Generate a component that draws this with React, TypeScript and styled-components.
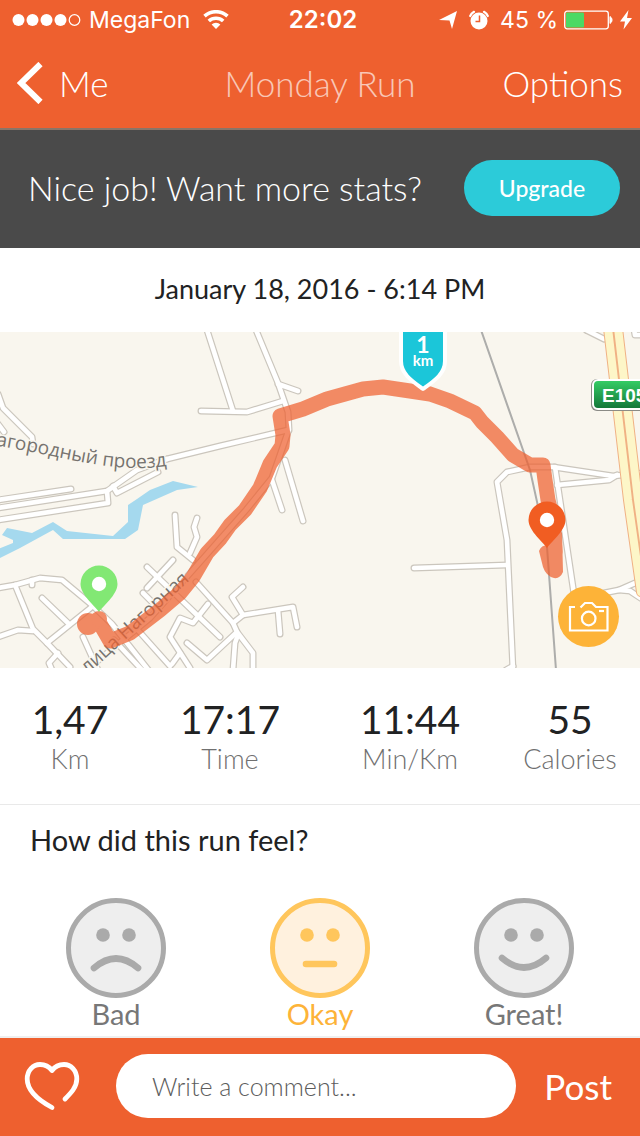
import React from "react";
import styled, { createGlobalStyle } from "styled-components";

const color = {
  orange: "#ee602f",
  cyan: "#2ccbd9",
  amber: "#fdb338",
  dark: "#4a4a4a",
  ink: "#212223",
  grey: "#707070",
  line: "#e9e9e9",
};

const GlobalStyle = createGlobalStyle`
  *, *::before, *::after { box-sizing: border-box; }
  body {
    margin: 0;
    background: #fff;
    color: ${color.ink};
    font-family: Lato, "Open Sans", sans-serif;
  }
  button, input { font: inherit; }
`;

const Screen = styled.div`
  min-height: 100vh;
  display: flex;
  flex-direction: column;
`;

const Header = styled.header`
  background: ${color.orange};
  color: #fff;
  border-bottom: 2px solid #8a7568;
`;

const StatusBar = styled.div`
  display: grid;
  grid-template-columns: 1fr auto 1fr;
  align-items: center;
  height: 40px;
  padding: 0 6px 0 12px;
  font-family: Inter, Roboto, sans-serif;
  font-size: 23px;
  line-height: 32px;
`;

const StatusGroup = styled.div<{ $end?: boolean }>`
  display: flex;
  align-items: center;
  gap: ${(p) => (p.$end ? 6 : 8)}px;
  justify-content: ${(p) => (p.$end ? "flex-end" : "flex-start")};
  white-space: nowrap;
`;

const Clock = styled.time`
  font-size: 24px;
  font-weight: 600;
`;

const NavBar = styled.nav`
  display: grid;
  grid-template-columns: 1fr auto 1fr;
  align-items: center;
  height: 88px;
  padding: 0 17px 2px;
`;

const NavButton = styled.button<{ $end?: boolean }>`
  display: flex;
  align-items: center;
  gap: 16px;
  justify-self: ${(p) => (p.$end ? "end" : "start")};
  padding: 0;
  border: 0;
  background: none;
  color: #fff;
  font-size: 35px;
  font-weight: 300;
  line-height: 40px;
`;

const Title = styled.h1`
  margin: 0;
  font-size: 35px;
  font-weight: 300;
  line-height: 40px;
  opacity: 0.65;
`;

const Banner = styled.section`
  display: flex;
  align-items: center;
  justify-content: space-between;
  height: 118px;
  padding: 0 20px 2px 28px;
  background: ${color.dark};
  color: #fff;
`;

const BannerText = styled.p`
  margin: 0;
  font-size: 34px;
  font-weight: 300;
  line-height: 40px;
`;

const UpgradeButton = styled.button`
  width: 156px;
  height: 56px;
  padding: 0;
  border: 0;
  border-radius: 28px;
  background: ${color.cyan};
  color: #fff;
  font-size: 23px;
  font-weight: 500;
`;

const RunDate = styled.p`
  margin: 0;
  padding: 25px 0 27px;
  font-size: 27px;
  line-height: 32px;
  text-align: center;
`;

const MapPanel = styled.section`
  position: relative;
  height: 336px;
  background: #f9f6ee;
  overflow: hidden;
`;

const MapDrawing = styled.svg`
  display: block;
  width: 100%;
  height: 100%;
`;

const CameraButton = styled.button`
  position: absolute;
  right: 21px;
  bottom: 21px;
  width: 61px;
  height: 61px;
  padding: 0;
  border: 0;
  border-radius: 50%;
  background: ${color.amber};
`;

const Stats = styled.dl`
  display: grid;
  grid-template-columns: 7fr 9fr 9fr 7fr;
  margin: 0;
  padding: 27px 0 29px;
  border-bottom: 1px solid ${color.line};
`;

const Stat = styled.div`
  display: flex;
  flex-direction: column-reverse;
  align-items: center;
`;

const StatLabel = styled.dt`
  color: ${color.grey};
  font-size: 27px;
  font-weight: 300;
  line-height: 32px;
`;

const StatValue = styled.dd`
  margin: 0;
  font-size: 39px;
  line-height: 48px;
`;

const Feel = styled.fieldset`
  flex: 1;
  min-width: 0;
  margin: 0;
  padding: 0 14px;
  border: 0;
  border-bottom: 2px solid #efefef;
`;

const Question = styled.legend`
  padding: 19px 16px 42px;
  font-size: 29px;
  line-height: 32px;
`;

const Moods = styled.div`
  display: grid;
  grid-template-columns: repeat(3, 1fr);
`;

const Mood = styled.label<{ $on?: boolean }>`
  position: relative;
  display: flex;
  flex-direction: column;
  align-items: center;
  color: ${(p) => (p.$on ? color.amber : "#777")};
  font-size: 29px;
  line-height: 32px;
`;

const MoodRadio = styled.input`
  position: absolute;
  opacity: 0;
`;

const CommentBar = styled.form`
  display: flex;
  align-items: center;
  height: 98px;
  padding: 0 28px 2px 24px;
  background: ${color.orange};
`;

const LikeButton = styled.button`
  display: flex;
  padding: 0;
  border: 0;
  background: none;
`;

const CommentInput = styled.input`
  flex: 1;
  min-width: 0;
  height: 64px;
  margin: 0 28px 0 36px;
  padding: 0 36px;
  border: 0;
  border-radius: 32px;
  background: #fff;
  font-size: 25px;
  font-weight: 300;
  &::placeholder { color: #5c5c5c; opacity: 1; }
`;

const PostButton = styled.button`
  padding: 0;
  border: 0;
  background: none;
  color: #fff;
  font-size: 35px;
  line-height: 40px;
`;

const roads = [
  "M-2 62L3 76L32 105L33 112", "M-2 92L4 100",
  "M207 -2L233 79", "M201 79L247 80L283 69",
  "M256 -2L278 51L288 80L289 98", "M278 52L298 59",
  "M167 127L220 114L288 98",
  "M288 100L272 146L246 178L200 230L150 286L84 340",
  "M285 128L303 189", "M272 148L282 178",
  "M-2 168L71 157", "M-2 176L107 159L137 138L167 127",
  "M-2 188L108 171L107 159", "M113 154L117 161L158 140",
  "M-2 256L15 253L40 246L62 248L92 273L112 292L150 340",
  "M15 253L33 297L47 311L70 335", "M-2 305L18 298L33 299",
  "M42 266L68 291", "M47 311L93 274", "M32 248L32 253",
  "M58 321L49 331L52 338", "M83 305L98 338", "M114 308L142 338",
  "M175 183L177 215L193 228", "M197 186L194 195L197 205L190 221",
  "M147 235L220 305", "M173 228L147 256", "M143 261L153 271",
  "M136 296L170 334", "M196 250L233 291L237 300L253 321L253 338",
  "M208 272L193 291L180 286L170 305L190 336", "M180 321L172 332",
  "M187 311L207 328L237 300", "M233 291L243 283L232 265L243 255",
  "M243 283L293 275L297 295", "M278 278L280 302", "M238 303L235 311L233 338",
  "M414 236L507 233",
  "M513 338L507 208L497 150L507 140L530 135L553 135L613 144L642 141",
  "M513 334L506 338",
  "M555 135L574 262L580 290", "M557 153L609 148L617 143",
  "M586 -2L604 7", "M634 -3L635 3L642 3",
  "M604 261L619 258L642 248", "M619 258L630 259L642 267",
];

const track =
  "M88 291L99 290L110 309L130 301L160 278L180 261L193 245L207 221L220 207L230 193L245 178L260 156L270 132L282 114L283 103L280 84L303 77L327 67L363 57L383 55L410 59L430 62L450 69L475 81L482 90L497 105L513 123L530 133L543 133L545 148L548 168L553 188L555 220";

const Pin = ({ x, y, fill }: { x: number; y: number; fill: string }) => (
  <g transform={`translate(${x} ${y})`}>
    <path d="M0 28C-3 23 -18.5 11 -18.5 0A18.5 18.5 0 0 1 18.5 0C18.5 11 3 23 0 28Z" fill={fill} />
    <circle r="7.2" fill="#fff" />
  </g>
);

const RouteMap = () => (
  <MapDrawing viewBox="0 0 640 336" preserveAspectRatio="xMidYMid slice" role="img" aria-label="Route map">
    <defs>
      <path id="street-a" d="M-40 108C20 116 65 128 100 133C125 137 145 137 167 134" />
      <path id="street-b" d="M40 382L98 333L190 248" />
      <linearGradient id="shield" x1="0" y1="0" x2="0" y2="1">
        <stop offset="0" stopColor="#35cf66" />
        <stop offset="1" stopColor="#137538" />
      </linearGradient>
    </defs>
    <path
      fill="#a5d9ee"
      d="M-2 217L13 211L13 208L2 203L7 196L32 201L53 190L67 199L113 204L128 190L128 173L137 167L150 158L173 149L198 155L177 158L143 173L138 198L125 207L63 207L53 198L20 216L-2 227Z"
    />
    <g fill="none" strokeLinecap="round" strokeLinejoin="round">
      {roads.map((d) => <path key={d} d={d} stroke="#cbc6bd" strokeWidth="7" />)}
      {roads.map((d) => <path key={d} d={d} stroke="#fff" strokeWidth="4.6" />)}
      <path d="M608 -4L628 168L641 260M618 -4L638 168L651 260" stroke="#f0b184" strokeWidth="10" />
      <path d="M608 -4L628 168L641 260M618 -4L638 168L651 260" stroke="#fdf6c8" strokeWidth="8" />
      <path d="M481 -2L530 138L547 215L556 338" stroke="#adadab" strokeWidth="2" />
    </g>
    <g fontFamily='"Open Sans", "Noto Sans", sans-serif' fontSize="19" fontWeight="500" fill="#76736f" stroke="#f9f6ee" strokeWidth="3" paintOrder="stroke">
      <text textAnchor="end"><textPath href="#street-a" startOffset="100%">агородный проезд</textPath></text>
      <text textAnchor="end"><textPath href="#street-b" startOffset="100%">лица Нагорная</textPath></text>
    </g>
    <g opacity="0.72">
      <path d={track} fill="none" stroke={color.orange} strokeWidth="15" strokeLinecap="round" strokeLinejoin="round" />
      <circle cx="88" cy="292" r="11" fill={color.orange} />
      <circle cx="99" cy="287" r="8" fill={color.orange} />
      <path d="M539 219Q541 213 548 213L562 200L563 240Q560 247 554 246Q546 244 543 235Z" fill={color.orange} />
    </g>
    <Pin x={99} y={252} fill="#82e874" />
    <Pin x={547} y={188} fill="#f15d22" />
    <path d="M401 -4V29C401 42 412 49 423 57C434 49 445 42 445 29V-4Z" fill="#1bc6d9" stroke="#fff" strokeWidth="4" strokeLinejoin="round" />
    <g fill="#fff" fontFamily="Lato, sans-serif" fontWeight="700" textAnchor="middle">
      <text x="423" y="21" fontSize="23">1</text>
      <text x="423" y="34" fontSize="15">km</text>
    </g>
    <rect x="591" y="47" width="62" height="32" rx="6" fill="#8b8b86" />
    <rect x="593" y="48" width="60" height="29" rx="5" fill="url(#shield)" stroke="#fff" strokeWidth="2" />
    <text x="602" y="70" fill="#fff" fontFamily='"Liberation Sans", sans-serif' fontWeight="700" fontSize="19">E105</text>
  </MapDrawing>
);

const mouths = {
  bad: "M28 70Q50 51 72 70",
  okay: "M36 66H64",
  great: "M28 60Q50 79 72 60",
};

const Face = ({ mouth, on }: { mouth: keyof typeof mouths; on: boolean }) => {
  const stroke = on ? "#ffc65c" : "#aaa";
  return (
    <svg width="100" height="100" viewBox="0 0 100 100" aria-hidden="true">
      <circle cx="50" cy="50" r="47.5" fill={on ? "#fff1de" : "#eee"} stroke={stroke} strokeWidth="5" />
      <circle cx="37" cy="37" r="6.8" fill={stroke} />
      <circle cx="63" cy="37" r="6.8" fill={stroke} />
      <path d={mouths[mouth]} fill="none" stroke={stroke} strokeWidth="6.6" strokeLinecap="round" />
    </svg>
  );
};

const stats = [
  ["Km", "1,47"],
  ["Time", "17:17"],
  ["Min/Km", "11:44"],
  ["Calories", "55"],
];

const moods: { id: keyof typeof mouths; label: string }[] = [
  { id: "bad", label: "Bad" },
  { id: "okay", label: "Okay" },
  { id: "great", label: "Great!" },
];

export default function App() {
  const [mood, setMood] = React.useState("okay");
  return (
    <Screen>
      <GlobalStyle />
      <Header>
        <StatusBar>
          <StatusGroup>
            <svg width="69" height="14" viewBox="0 0 69 14" fill="#fff" aria-hidden="true">
              {[6.5, 20.5, 34.5, 48.5].map((x) => <circle key={x} cx={x} cy="7" r="6" />)}
              <circle cx="62.5" cy="7" r="5.3" fill="none" stroke="#fff" strokeWidth="1.2" />
            </svg>
            <span>MegaFon</span>
            <svg width="34" height="20" viewBox="0 0 34 20" fill="none" stroke="#fff" aria-hidden="true">
              <path d="M6.500 6.200A17 17 0 0 1 29.500 6.200" strokeWidth="3.600" />
              <path d="M10.800 11A10.600 10.600 0 0 1 25.200 11" strokeWidth="3.600" />
              <path d="M18 19L13.600 14.500A6.300 6.300 0 0 1 22.400 14.500Z" fill="#fff" stroke="none" />
            </svg>
          </StatusGroup>
          <Clock>22:02</Clock>
          <StatusGroup $end>
            <svg width="25" height="20" viewBox="0 0 25 20" fill="#fff" aria-hidden="true">
              <path d="M1 10L19 1L14 19L11.500 10.500Z" />
            </svg>
            <svg width="25" height="20" viewBox="0 0 25 20" aria-hidden="true">
              <circle cx="10" cy="11" r="8.500" fill="#fff" />
              <path d="M1.200 6A9.600 9.600 0 0 1 5 1.800M18.800 6A9.600 9.600 0 0 0 15 1.800" fill="none" stroke="#fff" strokeWidth="2.200" strokeLinecap="round" />
              <path d="M10.500 5.500V11.500H6.500" fill="none" stroke={color.orange} strokeWidth="1.500" />
            </svg>
            <span>45 %</span>
            <svg width="50" height="20" viewBox="0 0 50 20" aria-hidden="true">
              <rect x="0.700" y="1.200" width="43.600" height="17.600" rx="2.500" fill="none" stroke="#fff" strokeWidth="1.300" />
              <rect x="2" y="2.500" width="18" height="15" rx="1" fill="#4cd964" />
              <path d="M46 6.500A4 4 0 0 1 46 13.500Z" fill="#fff" stroke="#fff" />
            </svg>
            <svg width="14" height="22" viewBox="0 0 14 22" fill="#fff" aria-hidden="true">
              <path d="M8.500 1L0 12.500H5L3.500 20.500L12 9H7Z" />
            </svg>
          </StatusGroup>
        </StatusBar>
        <NavBar>
          <NavButton type="button">
            <svg width="26" height="42" viewBox="0 0 26 42" fill="none" aria-hidden="true">
              <path d="M23.500 2L4 21L23.500 40" stroke="#fff" strokeWidth="6" />
            </svg>
            Me
          </NavButton>
          <Title>Monday Run</Title>
          <NavButton type="button" $end>Options</NavButton>
        </NavBar>
      </Header>

      <Banner>
        <BannerText>Nice job! Want more stats?</BannerText>
        <UpgradeButton type="button">Upgrade</UpgradeButton>
      </Banner>

      <RunDate>January 18, 2016 - 6:14 PM</RunDate>

      <MapPanel>
        <RouteMap />
        <CameraButton type="button" aria-label="Add photo">
          <svg width="61" height="61" viewBox="0 0 61 61" fill="none" stroke="#fff" strokeWidth="2.200" aria-hidden="true">
            <path d="M17 21H12V44.500H49.500V21H38L34 17H27L22.500 21.500" />
            <circle cx="30.700" cy="32.500" r="6.800" />
            <path d="M41 25H46" />
          </svg>
        </CameraButton>
      </MapPanel>

      <Stats>
        {stats.map(([label, value]) => (
          <Stat key={label}>
            <StatLabel>{label}</StatLabel>
            <StatValue>{value}</StatValue>
          </Stat>
        ))}
      </Stats>

      <Feel>
        <Question>How did this run feel?</Question>
        <Moods>
          {moods.map(({ id, label }) => (
            <Mood key={id} $on={mood === id}>
              <MoodRadio type="radio" name="mood" value={id} checked={mood === id} onChange={() => setMood(id)} />
              <Face mouth={id} on={mood === id} />
              {label}
            </Mood>
          ))}
        </Moods>
      </Feel>

      <CommentBar onSubmit={(e) => e.preventDefault()}>
        <LikeButton type="button" aria-label="Like">
          <svg width="56" height="50" viewBox="0 0 56 50" fill="none" stroke="#fff" strokeWidth="4.800" strokeLinecap="round" strokeLinejoin="round" aria-hidden="true">
            <path d="M28 46.500C15 39.500 3.200 30 3.200 18C3.200 9.500 9 3.500 16 3.500C21 3.500 25 5.500 28 9.500C31 5.500 35 3.500 40 3.500C47 3.500 52.800 9.500 52.800 18C52.800 26 47 32 41 38" />
          </svg>
        </LikeButton>
        <CommentInput type="text" aria-label="Comment" placeholder="Write a comment..." />
        <PostButton type="submit">Post</PostButton>
      </CommentBar>
    </Screen>
  );
}
